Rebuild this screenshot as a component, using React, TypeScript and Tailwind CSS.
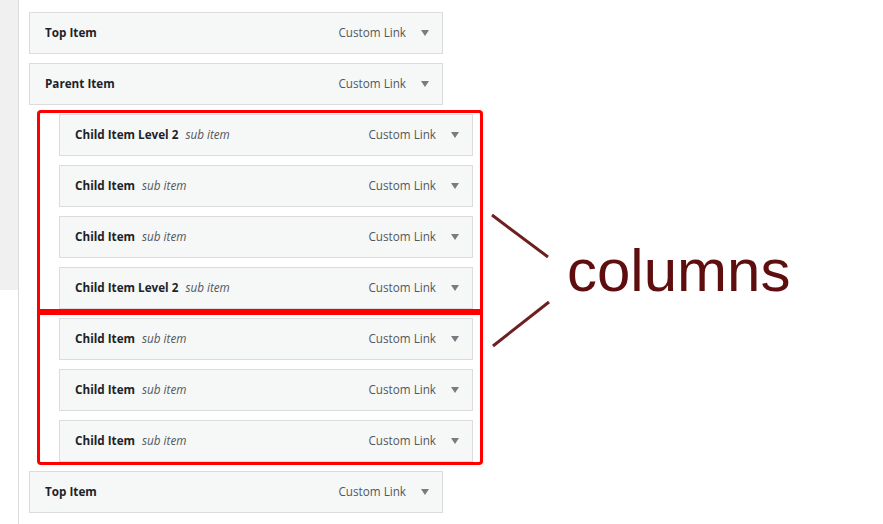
import { Fragment } from "react";

type Item = { title: string; sub?: string };

// menu rows, split in two column groups
const columnA: Item[] = [
  { title: "Child Item Level 2", sub: "sub item" },
  { title: "Child Item", sub: "sub item" },
  { title: "Child Item", sub: "sub item" },
  { title: "Child Item Level 2", sub: "sub item" },
];
const columnB: Item[] = [
  { title: "Child Item", sub: "sub item" },
  { title: "Child Item", sub: "sub item" },
  { title: "Child Item", sub: "sub item" },
];

function MenuItem({ title, sub }: Item) {
  return (
    <div className="flex h-[42px] w-[414px] items-center border border-[#dcdcde] bg-[#f6f7f7] pl-[15px] pr-[13px] text-[11.7px]">
      <span className="font-bold text-[#1d2327]">{title}</span>
      {sub ? <span className="ml-[7px] italic text-[#50575e]">{sub}</span> : null}
      <span className="ml-auto text-[#50575e]">Custom Link</span>
      <svg width="8" height="6" viewBox="0 0 8 6" className="ml-[15px]">
        <path d="M0 0h8L4 6z" fill="#787c82" />
      </svg>
    </div>
  );
}

function Column({ items, className }: { items: Item[]; className: string }) {
  return (
    <div className={`ml-2 flex w-[446px] flex-col gap-[9px] border-[3px] border-[#ff0000] pl-[19px] ${className}`}>
      {items.map((it, i) => (
        <Fragment key={i}>
          <MenuItem {...it} />
        </Fragment>
      ))}
    </div>
  );
}

export default function App() {
  return (
    <div className="flex h-[524px] w-[883px] overflow-hidden bg-white font-['Open_Sans',sans-serif]">
      <div className="h-[290px] w-[18px] shrink-0 bg-[#f0f0f1]" />
      <div className="flex w-[472px] shrink-0 flex-col border-l border-[#dcdcde] pl-[10px] pt-[12px]">
        <MenuItem title="Top Item" />
        <div className="mt-[9px]">
          <MenuItem title="Parent Item" />
        </div>
        <Column items={columnA} className="mt-[5px] rounded-t-[4px] pt-px" />
        <Column items={columnB} className="rounded-b-[4px] pt-[3px]" />
        <div className="mt-[6px]">
          <MenuItem title="Top Item" />
        </div>
      </div>

      {/* annotation */}
      <div className="mt-[212px] flex items-start">
        <svg width="64" height="138" viewBox="0 0 64 138" className="shrink-0">
          <line x1="2" y1="3" x2="58" y2="45" stroke="#6e2020" strokeWidth="3" />
          <line x1="59" y1="90" x2="3" y2="134" stroke="#6e2020" strokeWidth="3" />
        </svg>
        <span className="ml-[13px] mt-[29px] font-['Liberation_Sans',sans-serif] text-[60px] leading-none text-[#5e0e0e]">
          columns
        </span>
      </div>
    </div>
  );
}
